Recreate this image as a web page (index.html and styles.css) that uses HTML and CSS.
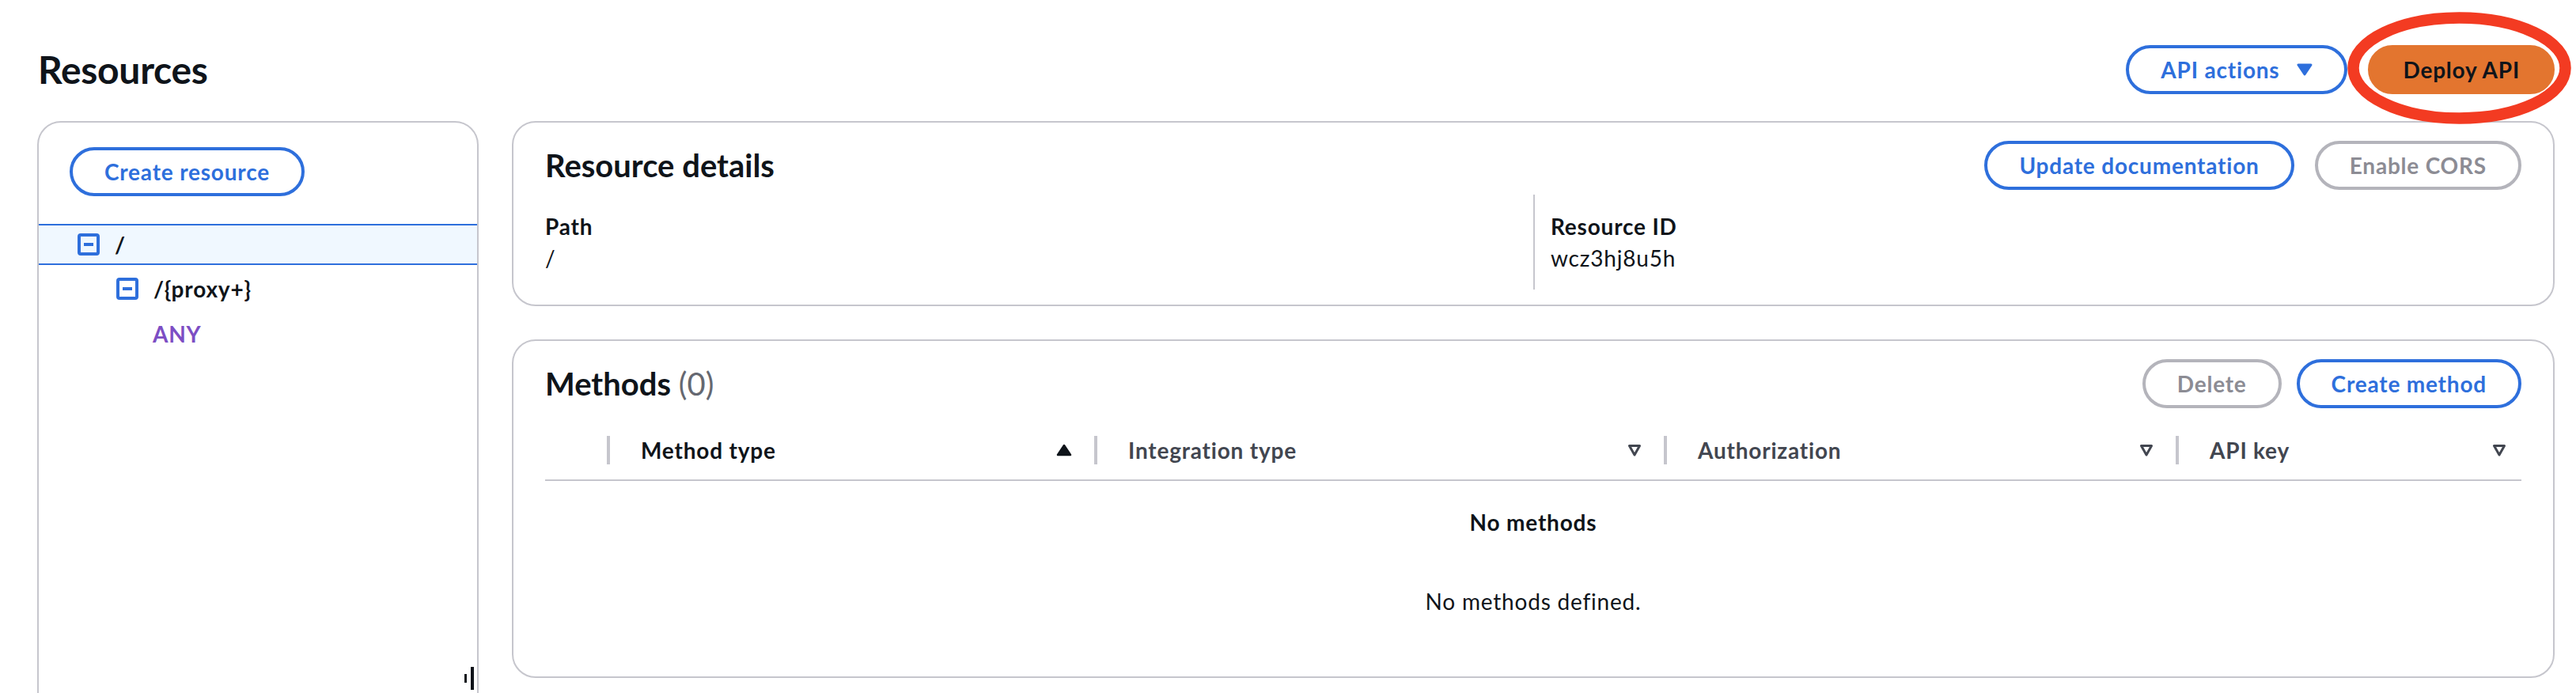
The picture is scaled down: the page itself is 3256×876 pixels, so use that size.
FILE: index.html
```html
<!DOCTYPE html>
<html lang="en">
<head>
<meta charset="utf-8">
<title>Resources</title>
<link rel="stylesheet" href="styles.css">
</head>
<body>
<div class="page">
  <header class="topbar">
    <h1 class="page-title">Resources</h1>
    <div class="top-actions">
      <button class="btn btn-normal">API actions
        <svg class="caret" viewBox="0 0 20 16"><path d="M2 2 L18 2 L10 14 Z" fill="#2e6fdc" stroke="#2e6fdc" stroke-width="3" stroke-linejoin="round"/></svg>
      </button>
      <div class="deploy">
        <button class="btn btn-primary">Deploy API</button>
        <svg class="highlight" viewBox="0 0 283 142"><ellipse cx="141.5" cy="71" rx="134" ry="63.5" fill="none" stroke="#f33b22" stroke-width="14.5"/></svg>
      </div>
    </div>
  </header>

  <div class="main">
    <aside class="tree-panel">
      <div class="tree-toolbar">
        <button class="btn btn-normal">Create resource</button>
      </div>
      <ul class="tree">
        <li class="tree-row selected">
          <svg class="toggle" viewBox="0 0 28 28"><rect x="2" y="2" width="24" height="24" rx="2" fill="none" stroke="#2e6fdc" stroke-width="4"/><path d="M8 14 H20" stroke="#2e6fdc" stroke-width="4"/></svg>
          <span class="node-name">/</span>
        </li>
        <li class="tree-row child">
          <svg class="toggle" viewBox="0 0 28 28"><rect x="2" y="2" width="24" height="24" rx="2" fill="none" stroke="#2e6fdc" stroke-width="4"/><path d="M8 14 H20" stroke="#2e6fdc" stroke-width="4"/></svg>
          <span class="node-name">/{proxy+}</span>
        </li>
        <li class="tree-row method">
          <span class="method-any">ANY</span>
        </li>
      </ul>
      <div class="resize-handle"><span class="bar-short"></span><span class="bar-long"></span></div>
    </aside>

    <div class="right">
      <section class="card details">
        <div class="card-header">
          <h2 class="card-title">Resource details</h2>
          <div class="btn-group">
            <button class="btn btn-normal">Update documentation</button>
            <button class="btn btn-disabled">Enable CORS</button>
          </div>
        </div>
        <div class="kv">
          <div class="kv-col">
            <div class="kv-label">Path</div>
            <div class="kv-value">/</div>
          </div>
          <div class="kv-col kv-col-divided">
            <div class="kv-label">Resource ID</div>
            <div class="kv-value">wcz3hj8u5h</div>
          </div>
        </div>
      </section>

      <section class="card methods">
        <div class="card-header">
          <h2 class="card-title">Methods <span class="count">(0)</span></h2>
          <div class="btn-group btn-group-tight">
            <button class="btn btn-disabled">Delete</button>
            <button class="btn btn-normal">Create method</button>
          </div>
        </div>
        <div class="table-head">
          <div class="th th-select"></div>
          <div class="th">
            <span class="sep"></span><span class="th-label th-sorted">Method type</span>
            <svg class="sort sort-up" viewBox="0 0 20 16"><path d="M10 2 L18 14 L2 14 Z" fill="#0f141a" stroke="#0f141a" stroke-width="2.5" stroke-linejoin="round"/></svg>
          </div>
          <div class="th">
            <span class="sep"></span><span class="th-label">Integration type</span>
            <svg class="sort" viewBox="0 0 18 16"><path d="M2.5 2.5 L15.5 2.5 L9 14 Z" fill="none" stroke="#424650" stroke-width="3" stroke-linejoin="round"/></svg>
          </div>
          <div class="th">
            <span class="sep"></span><span class="th-label">Authorization</span>
            <svg class="sort" viewBox="0 0 18 16"><path d="M2.5 2.5 L15.5 2.5 L9 14 Z" fill="none" stroke="#424650" stroke-width="3" stroke-linejoin="round"/></svg>
          </div>
          <div class="th th-last">
            <span class="sep"></span><span class="th-label">API key</span>
            <svg class="sort" viewBox="0 0 18 16"><path d="M2.5 2.5 L15.5 2.5 L9 14 Z" fill="none" stroke="#424650" stroke-width="3" stroke-linejoin="round"/></svg>
          </div>
        </div>
        <div class="empty">
          <div class="empty-title">No methods</div>
          <div class="empty-text">No methods defined.</div>
        </div>
      </section>
    </div>
  </div>
</div>
</body>
</html>
```

FILE: styles.css
```css
* { box-sizing: border-box; margin: 0; padding: 0; }

html, body {
  width: 3256px;
  height: 876px;
  overflow: hidden;
  background: #ffffff;
}

body {
  font-family: Lato, "Open Sans", sans-serif;
  font-size: 28px;
  line-height: 40px;
  letter-spacing: 0.8px;
  color: #0f141a;
}

.page {
  padding: 57px 27px 0 47px;
}

/* top bar */
.topbar {
  display: flex;
  align-items: center;
  justify-content: space-between;
  height: 62px;
}

.page-title {
  font-size: 48px;
  line-height: 60px;
  font-weight: 700;
  letter-spacing: -0.3px;
  padding-left: 1px;
}

.top-actions {
  display: flex;
  align-items: center;
  gap: 26px;
}

/* buttons */
.btn {
  display: inline-flex;
  align-items: center;
  font-family: inherit;
  font-size: 28px;
  line-height: 40px;
  font-weight: 700;
  letter-spacing: 0.8px;
  padding: 7px 40px;
  border: 4px solid;
  border-radius: 40px;
  background: #ffffff;
  white-space: nowrap;
}

.btn-normal { color: #2e6fdc; border-color: #2e6fdc; }
.btn-disabled { color: #8c8c94; border-color: #b4b4bb; }
.btn-primary { color: #0f141a; background: #e3752f; border-color: #e3752f; }

.caret { width: 20px; height: 16px; margin-left: 22px; }

.deploy { position: relative; }

.highlight {
  position: absolute;
  left: -26px;
  top: -42px;
  width: 283px;
  height: 142px;
  pointer-events: none;
}

/* main */
.main {
  display: flex;
  gap: 42px;
  margin-top: 34px;
}

.tree-panel {
  position: relative;
  flex: none;
  width: 558px;
  height: 760px;
  border: 2px solid #c6c6cd;
  border-radius: 30px 30px 0 0;
  padding-top: 31px;
}

.tree-toolbar { padding-left: 39px; }

.tree {
  list-style: none;
  margin-top: 35px;
}

.tree-row {
  display: flex;
  align-items: center;
  gap: 19px;
  font-weight: 700;
}

.tree-row.selected {
  height: 52px;
  padding-left: 49px;
  background: #f0f8ff;
  border-top: 2px solid #2e6fdc;
  border-bottom: 2px solid #2e6fdc;
}

.tree-row.child { height: 60px; padding-left: 98px; }
.tree-row.method { height: 54px; padding-left: 144px; }

.toggle { width: 28px; height: 28px; flex: none; }

.method-any { color: #7d4ec4; }

.resize-handle {
  position: absolute;
  right: 4px;
  top: 688px;
  display: flex;
  align-items: center;
  gap: 5px;
}

.bar-short { width: 3px; height: 11px; background: #0f141a; }
.bar-long { width: 4px; height: 29px; background: #0f141a; }

/* right column */
.right {
  flex: 1;
  display: flex;
  flex-direction: column;
  gap: 42px;
}

.card {
  border: 2px solid #c6c6cd;
  border-radius: 30px;
  padding: 23px 40px 19px;
}

.card-header {
  display: flex;
  align-items: center;
  justify-content: space-between;
  height: 62px;
}

.card-title {
  font-size: 40px;
  line-height: 48px;
  font-weight: 700;
  letter-spacing: 0;
}

.count { color: #656871; font-weight: 400; }

.btn-group { display: flex; gap: 26px; }
.btn-group-tight { gap: 19px; }

/* key-value */
.kv {
  display: grid;
  grid-template-columns: 1fr 1fr;
  margin-top: 6px;
}

.kv-col { padding: 20px 0; }

.kv-col-divided {
  border-left: 2px solid #c6c6cd;
  padding-left: 20px;
}

.kv-label { font-weight: 700; }

/* methods table */
.table-head {
  display: grid;
  grid-template-columns: 78px 616px 720px 647px 1fr;
  height: 76px;
  margin-top: 16px;
  border-bottom: 2px solid #c6c6cd;
}

.th {
  display: flex;
  align-items: center;
}

.sep {
  width: 4px;
  height: 36px;
  background: #c6c6cd;
  flex: none;
}

.th-label {
  margin-left: 39px;
  font-weight: 700;
  color: #424650;
}

.th-label.th-sorted { color: #0f141a; }

.sort {
  margin-left: auto;
  margin-right: 28px;
  width: 18px;
  height: 16px;
  flex: none;
}

.sort-up { width: 20px; }

.th-last .sort { margin-right: 19px; }

.empty {
  text-align: center;
  padding: 32px 0 56px;
}

.empty-title { font-weight: 700; }

.empty-text { margin-top: 60px; }
```
